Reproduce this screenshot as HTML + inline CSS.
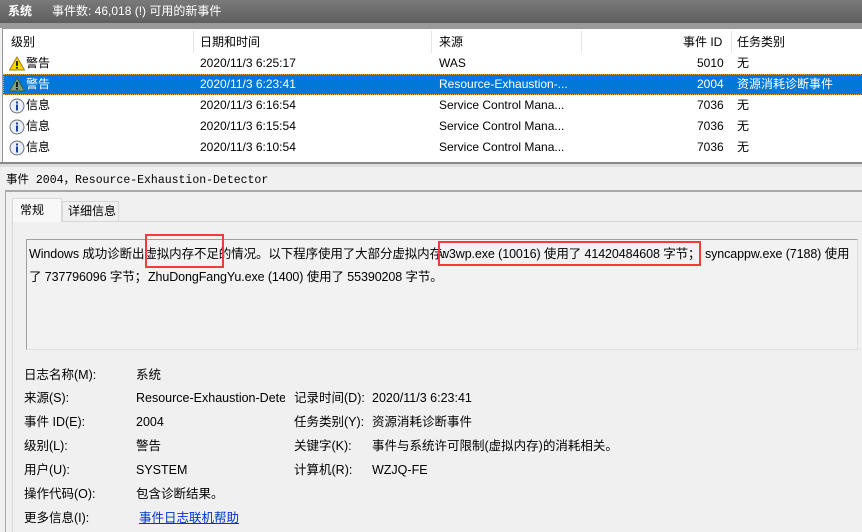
<!DOCTYPE html>
<html><head><meta charset="utf-8"><style>
*{margin:0;padding:0;box-sizing:border-box}
body{width:862px;height:532px;overflow:hidden;background:#f0f0f0;font-family:"Liberation Sans","Noto Sans CJK SC",sans-serif;font-size:12px;color:#000;position:relative}
.a{position:absolute;white-space:nowrap}
.title{left:0;top:0;width:862px;height:23px;background:linear-gradient(#7a7a7a,#5e5e5e);color:#fff;font-size:12px;line-height:23px}
.list{left:2px;top:28px;width:860px;height:134px;background:#fff;border-top:1px solid #999;border-left:1px solid #999}
.row{position:absolute;left:0;width:860px;height:21px;line-height:21px;font-size:12px}
.sel{background:#0078d7;color:#fff;outline:1px dotted #f0a040;outline-offset:-1px}
.c{position:absolute;top:0}
.hdr{position:absolute;top:0;height:26px;line-height:26px;width:860px}
.div{position:absolute;top:2px;width:1px;height:22px;background:#e5e5e5}
.ic{position:absolute;left:6px;top:3px}
.red{position:absolute;border:2px solid #f03c3c}
.lbl{font-size:12.5px;line-height:16px;height:16px}
.desc{font-size:12.5px;line-height:16px;letter-spacing:-0.1px}
</style></head><body>
<div class="a title"><span style="position:absolute;left:8px;font-weight:bold">系统</span><span style="position:absolute;left:52px">事件数: 46,018 (!) 可用的新事件</span></div>
<div class="a" style="left:0;top:23px;width:862px;height:5px;background:#9a9a9a"></div>
<div class="a list">
 <div class="hdr"><span class="c" style="left:8px">级别</span><div class="div" style="left:190px"></div><span class="c" style="left:197px">日期和时间</span><div class="div" style="left:428px"></div><span class="c" style="left:436px">来源</span><div class="div" style="left:578px"></div><span class="c" style="left:680px">事件 ID</span><div class="div" style="left:728px"></div><span class="c" style="left:734px">任务类别</span></div>
 <div class="row" style="top:24px"><svg class="ic" width="16" height="15"><path d="M8 1L15.5 14H.5Z" fill="#f5d800" stroke="#a08000"/><rect x="7.2" y="5" width="1.6" height="5" fill="#000"/><rect x="7.2" y="11" width="1.6" height="1.6" fill="#000"/></svg><span class="c" style="left:23px">警告</span><span class="c" style="left:197px">2020/11/3 6:25:17</span><span class="c" style="left:436px">WAS</span><span class="c" style="left:694px">5010</span><span class="c" style="left:734px">无</span></div>
 <div class="row sel" style="top:45px"><svg class="ic" width="16" height="15"><path d="M8 1L15.5 14H.5Z" fill="#7aa080" stroke="#406040"/><rect x="7.2" y="5" width="1.6" height="5" fill="#000"/><rect x="7.2" y="11" width="1.6" height="1.6" fill="#000"/></svg><span class="c" style="left:23px">警告</span><span class="c" style="left:197px">2020/11/3 6:23:41</span><span class="c" style="left:436px">Resource-Exhaustion-...</span><span class="c" style="left:694px">2004</span><span class="c" style="left:734px">资源消耗诊断事件</span></div>
 <div class="row" style="top:66px"><svg class="ic" width="16" height="16"><circle cx="8" cy="8" r="7" fill="#e8eefa" stroke="#707070"/><rect x="7" y="6.5" width="2" height="6" fill="#2040a0"/><rect x="7" y="3.5" width="2" height="2" fill="#2040a0"/></svg><span class="c" style="left:23px">信息</span><span class="c" style="left:197px">2020/11/3 6:16:54</span><span class="c" style="left:436px">Service Control Mana...</span><span class="c" style="left:694px">7036</span><span class="c" style="left:734px">无</span></div>
 <div class="row" style="top:87px"><svg class="ic" width="16" height="16"><circle cx="8" cy="8" r="7" fill="#e8eefa" stroke="#707070"/><rect x="7" y="6.5" width="2" height="6" fill="#2040a0"/><rect x="7" y="3.5" width="2" height="2" fill="#2040a0"/></svg><span class="c" style="left:23px">信息</span><span class="c" style="left:197px">2020/11/3 6:15:54</span><span class="c" style="left:436px">Service Control Mana...</span><span class="c" style="left:694px">7036</span><span class="c" style="left:734px">无</span></div>
 <div class="row" style="top:108px"><svg class="ic" width="16" height="16"><circle cx="8" cy="8" r="7" fill="#e8eefa" stroke="#707070"/><rect x="7" y="6.5" width="2" height="6" fill="#2040a0"/><rect x="7" y="3.5" width="2" height="2" fill="#2040a0"/></svg><span class="c" style="left:23px">信息</span><span class="c" style="left:197px">2020/11/3 6:10:54</span><span class="c" style="left:436px">Service Control Mana...</span><span class="c" style="left:694px">7036</span><span class="c" style="left:734px">无</span></div>
</div>
<div class="a" style="left:0;top:162px;width:862px;height:2px;background:#888"></div>
<div class="a" style="left:0;top:164px;width:862px;height:3px;background:#ddd"></div>
<div class="a" style="left:6px;top:171px;font-family:'Liberation Mono','Noto Sans CJK SC',monospace;font-size:11.5px">事件 2004，Resource-Exhaustion-Detector</div>
<div class="a" style="left:5px;top:190px;width:857px;height:2px;background:#a8a8a8"></div>
<div class="a" style="left:5px;top:192px;width:1px;height:340px;background:#a8a8a8"></div>
<div class="a" style="left:12px;top:221px;width:850px;height:311px;border-top:1px solid #d8d8d8;border-left:1px solid #d8d8d8"></div>
<div class="a" style="left:12px;top:198px;width:50px;height:24px;background:#f8f8f8;border:1px solid #d8d8d8;border-bottom:none;line-height:22px;padding-left:7px">常规</div>
<div class="a" style="left:62px;top:201px;width:57px;height:20px;border:1px solid #d8d8d8;border-bottom:none;line-height:19px;padding-left:5px">详细信息</div>
<div class="a" style="left:26px;top:239px;width:832px;height:111px;border:1px solid #a0a0a0;border-right-color:#e0e0e0;border-bottom-color:#e0e0e0;background:#f2f2f2"></div>
<div class="a desc" style="left:29px;top:246px">Windows 成功诊断出虚拟内存不足的情况。以下程序使用了大部分虚拟内存:</div>
<div class="a desc" style="left:440px;top:246px">w3wp.exe (10016) 使用了 41420484608 字节；</div>
<div class="a desc" style="left:705px;top:246px">syncappw.exe (7188) 使用</div>
<div class="a desc" style="left:29px;top:269px">了 737796096 字节；</div>
<div class="a desc" style="left:148px;top:269px">ZhuDongFangYu.exe (1400) 使用了 55390208 字节。</div>
<div class="red" style="left:145px;top:234px;width:79px;height:34px"></div>
<div class="red" style="left:438px;top:241px;width:263px;height:25px"></div>
<div class="a lbl" style="left:24px;top:367px">日志名称(M):</div><div class="a lbl" style="left:136px;top:367px">系统</div>
<div class="a lbl" style="left:24px;top:390px">来源(S):</div><div class="a lbl" style="left:136px;top:390px;width:149px;overflow:hidden">Resource-Exhaustion-Detector</div>
<div class="a lbl" style="left:294px;top:390px">记录时间(D):</div><div class="a lbl" style="left:372px;top:390px">2020/11/3 6:23:41</div>
<div class="a lbl" style="left:24px;top:414px">事件 ID(E):</div><div class="a lbl" style="left:136px;top:414px">2004</div>
<div class="a lbl" style="left:294px;top:414px">任务类别(Y):</div><div class="a lbl" style="left:372px;top:414px">资源消耗诊断事件</div>
<div class="a lbl" style="left:24px;top:438px">级别(L):</div><div class="a lbl" style="left:136px;top:438px">警告</div>
<div class="a lbl" style="left:294px;top:438px">关键字(K):</div><div class="a lbl" style="left:372px;top:438px">事件与系统许可限制(虚拟内存)的消耗相关。</div>
<div class="a lbl" style="left:24px;top:462px">用户(U):</div><div class="a lbl" style="left:136px;top:462px">SYSTEM</div>
<div class="a lbl" style="left:294px;top:462px">计算机(R):</div><div class="a lbl" style="left:372px;top:462px">WZJQ-FE</div>
<div class="a lbl" style="left:24px;top:486px">操作代码(O):</div><div class="a lbl" style="left:136px;top:486px">包含诊断结果。</div>
<div class="a lbl" style="left:24px;top:510px">更多信息(I):</div><div class="a lbl" style="left:139px;top:510px;color:#0033cc;text-decoration:underline">事件日志联机帮助</div>
</body></html>
